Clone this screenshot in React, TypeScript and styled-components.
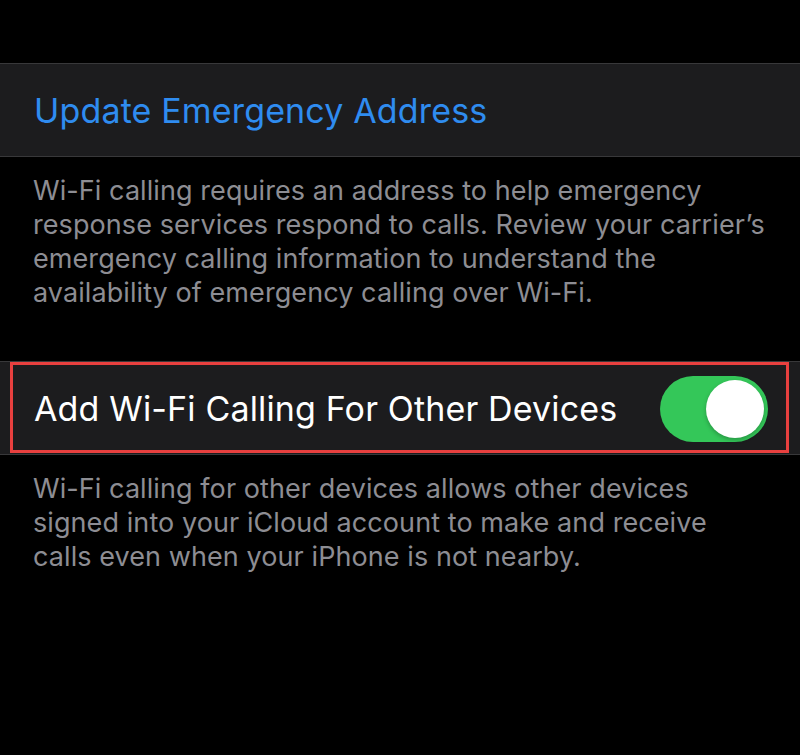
import React, { useState } from 'react';
import styled, { createGlobalStyle } from 'styled-components';

const COLORS = {
  page: '#000000',
  cell: '#1c1c1e',
  separator: '#38383a',
  link: '#2f8cf0',
  label: '#ffffff',
  footnote: '#8d8d93',
  highlight: '#e8403f',
  toggleOn: '#34c759',
  toggleOff: '#39393d',
};

const GlobalStyle = createGlobalStyle`
  html, body {
    margin: 0;
    padding: 0;
    background: ${COLORS.page};
  }
  body {
    font-family: Inter, 'Noto Sans', 'Liberation Sans', sans-serif;
    -webkit-font-smoothing: antialiased;
  }
`;

const Screen = styled.div`
  width: 800px;
  height: 755px;
  overflow: hidden;
  background: ${COLORS.page};
  padding-top: 63px;
  box-sizing: border-box;
`;

const Group = styled.section`
  display: flex;
  flex-direction: column;
`;

const Cell = styled.div`
  position: relative;
  display: flex;
  align-items: center;
  justify-content: space-between;
  height: 94px;
  padding: 1px 32px 0 34px;
  background: ${COLORS.cell};
  border-top: 1px solid ${COLORS.separator};
  border-bottom: 1px solid ${COLORS.separator};
  box-sizing: border-box;
`;

const Highlight = styled.div`
  position: absolute;
  left: 10px;
  right: 11px;
  top: 0;
  bottom: 1px;
  border: 3px solid ${COLORS.highlight};
  pointer-events: none;
`;

const LinkText = styled.button`
  border: 0;
  padding: 0;
  background: none;
  font-family: inherit;
  font-size: 34px;
  letter-spacing: 0.15px;
  color: ${COLORS.link};
  cursor: pointer;
`;

const Label = styled.span`
  font-size: 34px;
  letter-spacing: 0.15px;
  color: ${COLORS.label};
`;

const Footnote = styled.p<{ $bottom: number }>`
  margin: 0;
  padding: 17px 28px ${(p) => p.$bottom}px 33px;
  font-size: 27px;
  line-height: 34px;
  color: ${COLORS.footnote};
  letter-spacing: 0.08px;
`;

const Track = styled.button<{ $on: boolean }>`
  position: relative;
  width: 108px;
  height: 66px;
  padding: 0;
  border: 0;
  border-radius: 33px;
  background: ${(p) => (p.$on ? COLORS.toggleOn : COLORS.toggleOff)};
  cursor: pointer;
  flex-shrink: 0;
`;

const Knob = styled.span<{ $on: boolean }>`
  position: absolute;
  top: 4px;
  left: ${(p) => (p.$on ? '46px' : '4px')};
  width: 58px;
  height: 58px;
  border-radius: 50%;
  background: #ffffff;
  box-shadow: 0 2px 4px rgba(0, 0, 0, 0.25);
  transition: left 0.2s ease;
`;

const Toggle: React.FC<{ on: boolean; onChange: (v: boolean) => void }> = ({ on, onChange }) => (
  <Track $on={on} onClick={() => onChange(!on)} aria-pressed={on}>
    <Knob $on={on} />
  </Track>
);

const App: React.FC = () => {
  const [otherDevices, setOtherDevices] = useState(true);

  return (
    <>
      <GlobalStyle />
      <Screen>
        <Group>
          <Cell>
            <LinkText>Update Emergency Address</LinkText>
          </Cell>
          <Footnote $bottom={51}>
            Wi-Fi calling requires an address to help emergency response services respond to calls.
            Review your carrier’s emergency calling information to understand the availability of
            emergency calling over Wi-Fi.
          </Footnote>
        </Group>
        <Group>
          <Cell>
            <Label>Add Wi-Fi Calling For Other Devices</Label>
            <Toggle on={otherDevices} onChange={setOtherDevices} />
            <Highlight />
          </Cell>
          <Footnote $bottom={0}>
            Wi-Fi calling for other devices allows other devices signed into your iCloud account to
            make and receive calls even when your iPhone is not nearby.
          </Footnote>
        </Group>
      </Screen>
    </>
  );
};

export default App;
